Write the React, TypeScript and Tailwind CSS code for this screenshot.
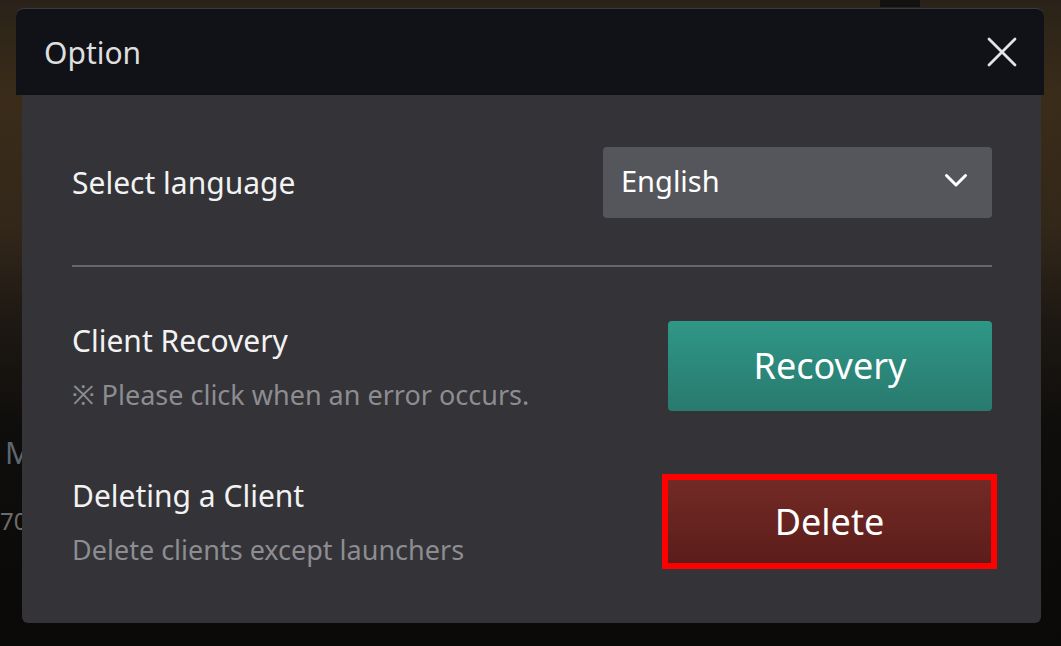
import React from 'react';

const font = { fontFamily: '"Noto Sans", "Open Sans", Arial, sans-serif' };

const CloseIcon = () => (
  <svg width="30" height="30" viewBox="0 0 30 30" fill="none">
    <path d="M2 2 L28 28 M28 2 L2 28" stroke="#e4e4e6" strokeWidth="2.8" strokeLinecap="round" />
  </svg>
);

const ChevronIcon = () => (
  <svg width="24" height="15" viewBox="0 0 24 15" fill="none">
    <path d="M2.5 2.5 L12 12 L21.5 2.5" stroke="#ffffff" strokeWidth="3" strokeLinecap="round" strokeLinejoin="round" />
  </svg>
);

interface SettingRowProps {
  title: string;
  desc: string;
  children: React.ReactNode;
  className?: string;
}

const SettingRow = ({ title, desc, children, className }: SettingRowProps) => (
  <div className={`flex items-center justify-between ${className ?? ''}`}>
    <div className="flex flex-col">
      <span className="text-[30px] leading-[40px] text-[#f2f2f2]">{title}</span>
      <span className="mt-[17px] text-[27px] leading-[34px] text-[#8d8d91]">{desc}</span>
    </div>
    {children}
  </div>
);

export default function App() {
  return (
    <div
      className="relative w-[1061px] h-[646px] overflow-hidden bg-[linear-gradient(180deg,#2a2219_0%,#3a2c19_15%,#33271a_35%,#1d1813_50%,#100e0c_65%,#0a0908_100%)]"
      style={font}
    >
      {/* blurred game background behind the dialog */}
      <div className="absolute left-[880px] top-0 w-[40px] h-[7px] bg-[#141210]" />
      <span className="absolute left-[5px] top-[430px] text-[30px] text-[#5d6670]">M</span>
      <span className="absolute left-0 top-[503px] text-[24px] text-[#6e6c6a]">705</span>

      {/* Option dialog */}
      <div className="relative pt-[8px] pl-[16px]">
        <div className="w-[1028px] h-[87px] flex items-center justify-between pl-[28px] pr-[27px] bg-[#111218] rounded-t-[8px] border-t border-[#3a3b40]">
          <span className="text-[30px] text-[#dedede]">Option</span>
          <CloseIcon />
        </div>

        <div className="ml-[6px] w-[1019px] h-[528px] pl-[50px] pr-[49px] bg-[#333338] rounded-b-[6px]">
          <div className="pt-[52px] flex items-center justify-between">
            <span className="text-[30px] leading-[40px] text-[#f2f2f2]">Select language</span>
            <div className="w-[389px] h-[71px] flex items-center justify-between pl-[18px] pr-[24px] pb-[4px] bg-[#55565b] rounded-[4px]">
              <span className="text-[29px] text-white">English</span>
              <ChevronIcon />
            </div>
          </div>

          <div className="mt-[47px] h-[2px] bg-[#68686c]" />

          <SettingRow title="Client Recovery" desc="※ Please click when an error occurs." className="mt-[54px] h-[90px]">
            <button className="w-[324px] h-[90px] rounded-[4px] bg-gradient-to-b from-[#2f9787] to-[#287a6e] text-[36px] text-white">
              Recovery
            </button>
          </SettingRow>

          <SettingRow title="Deleting a Client" desc="Delete clients except launchers" className="mt-[63px] h-[95px]">
            <div className="-mr-[5px] w-[335px] h-[95px] border-[6px] border-[#ff0000]">
              <button className="w-full h-full bg-gradient-to-b from-[#732a26] to-[#5c1d1a] text-[36px] text-white">
                Delete
              </button>
            </div>
          </SettingRow>
        </div>
      </div>
    </div>
  );
}
